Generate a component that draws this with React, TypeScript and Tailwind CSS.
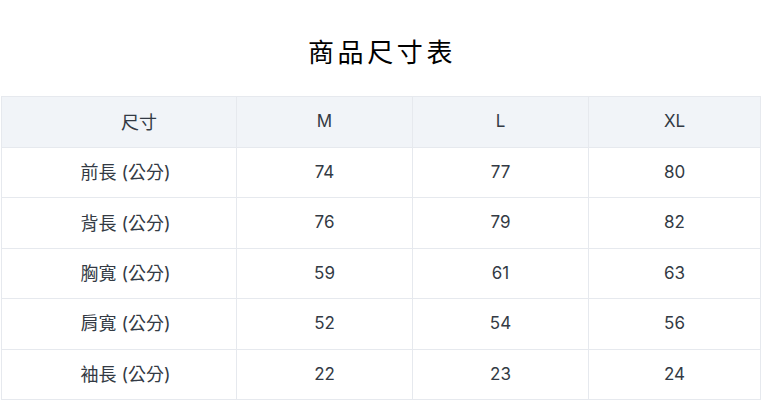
import React from "react";

const rows = [
  ["前長 (公分)", "74", "77", "80"],
  ["背長 (公分)", "76", "79", "82"],
  ["胸寬 (公分)", "59", "61", "63"],
  ["肩寬 (公分)", "52", "54", "56"],
  ["袖長 (公分)", "22", "23", "24"],
];

export default function App() {
  return (
    <div
      className="w-[764px] h-[401px] bg-white overflow-hidden"
      style={{ fontFamily: '"Inter", "Noto Sans CJK TC", sans-serif' }}
    >
      <h1
        className="pt-[34px] h-[96px] text-center text-[26px] leading-[34px] tracking-[0.14em] text-black font-normal"
        style={{ fontFamily: '"Noto Sans CJK TC", sans-serif' }}
      >
        商品尺寸表
      </h1>
      <table className="ml-[1px] w-[760px] table-fixed border-collapse text-[17px] text-[#333a44]">
        <colgroup>
          <col className="w-[235px]" />
          <col className="w-[176px]" />
          <col className="w-[176px]" />
          <col />
        </colgroup>
        <thead>
          <tr className="h-[51px] bg-[#f1f4f8]">
            {["尺寸", "M", "L", "XL"].map((h, i) => (
              <th
                key={h}
                className={
                  i === 0
                    ? "border border-[#e6e9ee] font-normal text-center p-0 pl-[40px] text-[18px]"
                    : "border border-[#e6e9ee] font-normal text-center p-0"
                }
              >
                {h}
              </th>
            ))}
          </tr>
        </thead>
        <tbody>
          {rows.map((r) => (
            <tr key={r[0]} className="h-[50.4px]">
              {r.map((c, i) => (
                <td
                  key={i}
                  className={
                    i === 0
                      ? "border border-[#e6e9ee] text-center p-0 pl-[13px] text-[18px]"
                      : "border border-[#e6e9ee] text-center p-0"
                  }
                >
                  {c}
                </td>
              ))}
            </tr>
          ))}
        </tbody>
      </table>
    </div>
  );
}
